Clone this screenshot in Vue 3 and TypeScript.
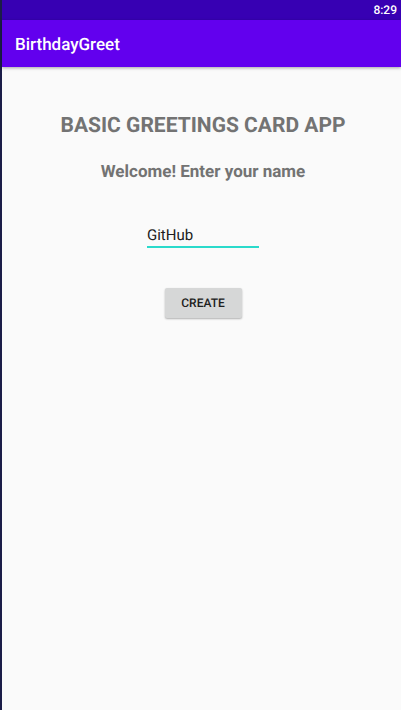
<script setup lang="ts">
import { ref } from 'vue'

const name = ref('GitHub')
</script>

<template>
  <div class="screen">
    <div class="status"><time>8:29</time></div>
    <header class="bar"><h1>BirthdayGreet</h1></header>
    <main class="content">
      <h2 class="title">BASIC GREETINGS CARD APP</h2>
      <label class="prompt" for="name">Welcome! Enter your name</label>
      <input id="name" v-model="name" class="field" type="text" spellcheck="false" autocomplete="off" />
      <button class="create" type="button">CREATE</button>
    </main>
  </div>
</template>

<style>
body {
  background: #fafafa;
}
</style>

<style scoped>
.screen {
  box-sizing: border-box;
  min-height: 100vh;
  border-left: 2px solid #1b1d48;
  background: #fafafa;
  font-family: Roboto, sans-serif;
  text-rendering: geometricPrecision;
  color: #737373;
}
.status {
  display: flex;
  align-items: center;
  justify-content: flex-end;
  height: 20px;
  padding-right: 4px;
  background: #3700b3;
  color: #fff;
  font-size: 12px;
  font-weight: 500;
}
.bar {
  box-sizing: border-box;
  display: flex;
  align-items: center;
  height: 47px;
  padding: 2px 13px 0;
  background: #6200ee;
  color: #fff;
  box-shadow: 0 1px 3px rgba(0, 0, 0, 0.35);
}
.bar h1 {
  margin: 0;
  font-size: 17px;
  font-weight: 500;
}
.content {
  display: flex;
  flex-direction: column;
  align-items: center;
  padding: 45px 0 0 3px;
}
.title {
  margin: 0;
  font-size: 21px;
  line-height: 28px;
  font-weight: 700;
}
.prompt {
  margin-top: 20px;
  font-size: 17px;
  line-height: 24px;
  font-weight: 700;
}
.field {
  box-sizing: border-box;
  width: 112px;
  height: 26px;
  margin-top: 38px;
  padding: 2px 0 0;
  border: 0;
  border-bottom: 2px solid #2adacb;
  border-radius: 0;
  outline: 0;
  background: transparent;
  color: #202020;
  font: 400 15px/22px Roboto, sans-serif;
  text-rendering: geometricPrecision;
}
.create {
  width: 77px;
  height: 30px;
  margin-top: 40px;
  padding: 0;
  border: 0;
  border-radius: 2px;
  background: #d6d7d7;
  color: #202020;
  font: 500 12px/16px Roboto, sans-serif;
  text-rendering: geometricPrecision;
  box-shadow: 0 1px 2px rgba(0, 0, 0, 0.3);
}
</style>
